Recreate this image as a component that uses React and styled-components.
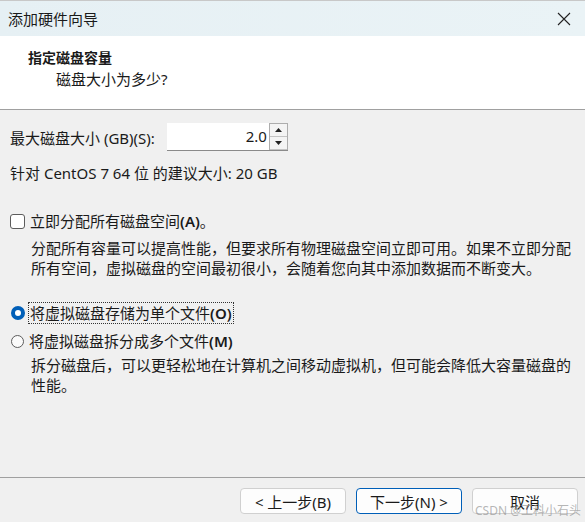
import React from 'react'
import styled, { createGlobalStyle } from 'styled-components'

const Global = createGlobalStyle`
  html, body { margin: 0; padding: 0; }
  body {
    width: 585px;
    height: 522px;
    overflow: hidden;
    font-family: "Noto Sans", "Noto Sans CJK SC", sans-serif;
    color: #1a1a1a;
  }
`

const Window = styled.div`
  width: 585px;
  height: 522px;
  display: flex;
  flex-direction: column;
  background: #f0f0f0;
  border-top: 1px solid #c8c8c8;
  box-sizing: border-box;
`

const TitleBar = styled.div`
  height: 35px;
  display: flex;
  align-items: center;
  justify-content: space-between;
  padding: 0 12px 0 8px;
  background: linear-gradient(90deg, #e6f0f4, #eaf3f6);
  font-size: 15px;
  color: #1a1a1a;
`

const Close = styled.svg`
  width: 14px;
  height: 14px;
  margin-right: 2px;
`

const Header = styled.div`
  height: 74px;
  background: #fff;
  border-bottom: 1px solid #a0a0a0;
  padding: 12px 0 0 28px;
  box-sizing: border-box;
`

const HeadTitle = styled.div`
  font-size: 14px;
  font-weight: 700;
  line-height: 20px;
`

const HeadSub = styled.div`
  font-size: 15px;
  line-height: 22px;
  padding-left: 28px;
`

const Body = styled.div`
  flex: 1;
  padding: 13px 10px 0 10px;
  font-size: 15px;
`

const SizeRow = styled.div`
  display: flex;
  align-items: center;
  gap: 12px;
  height: 28px;
`

const Spin = styled.div`
  display: flex;
  height: 28px;
  border-bottom: 1px solid #8a8a8a;
  box-sizing: border-box;
`

const SpinInput = styled.div`
  width: 100px;
  background: #fff;
  text-align: right;
  line-height: 27px;
  padding-right: 2px;
  font-size: 15px;
`

const SpinButtons = styled.div`
  width: 17px;
  display: flex;
  flex-direction: column;
  border: 1px solid #adadad;
  border-bottom: none;
  background: #e8e8e8;
`

const SpinBtn = styled.div`
  flex: 1;
  display: flex;
  align-items: center;
  justify-content: center;
  background: #f4f4f4;
  border-bottom: 1px solid #c4c4c4;
`

const Hint = styled.div`
  margin-top: 12px;
  line-height: 20px;
`

const Option = styled.div`
  display: flex;
  align-items: center;
  gap: 3px;
  line-height: 20px;
  margin-top: ${p => p.top}px;
`

const CheckBox = styled.span`
  width: 13px;
  height: 13px;
  border: 1px solid #5c5c5c;
  border-radius: 3px;
  background: #fff;
  flex-shrink: 0;
`

const Radio = styled.span`
  width: ${p => (p.checked ? 14 : 13)}px;
  height: ${p => (p.checked ? 14 : 13)}px;
  border-radius: 50%;
  box-sizing: border-box;
  flex-shrink: 0;
  background: ${p => (p.checked ? '#fff' : '#fafafa')};
  border: ${p => (p.checked ? '4px solid #005fb8' : '1px solid #5c5c5c')};
  margin-left: 1px;
`

const Label = styled.span`
  border: 1px dotted ${p => (p.focus ? '#333' : 'transparent')};
  padding: 0 1px;
  b { font-weight: 600; }
`

const Desc = styled.div`
  padding-left: 21px;
  margin-top: ${p => p.top}px;
  line-height: 20px;
`

const Footer = styled.div`
  height: 45px;
  border-top: 1px solid #a0a0a0;
  box-sizing: border-box;
  display: flex;
  justify-content: flex-end;
  align-items: flex-start;
  gap: 10px;
  padding: 10px 7px 0 0;
  position: relative;
`

const Button = styled.div`
  width: 106px;
  height: 26px;
  box-sizing: border-box;
  border-radius: 4px;
  background: #fdfdfd;
  border: 1px solid ${p => (p.primary ? '#005fb8' : '#d0d0d0')};
  box-shadow: ${p => (p.primary ? 'inset 0 0 0 1px #fff' : 'none')};
  display: flex;
  align-items: center;
  justify-content: center;
  font-size: 15px;
`

const Watermark = styled.span`
  position: absolute;
  right: 4px;
  bottom: 3px;
  font-size: 12px;
  color: rgba(150, 150, 150, 0.7);
`

export default function App() {
  return (
    <>
      <Global />
      <Window>
        <TitleBar>
          <span>添加硬件向导</span>
          <Close viewBox="0 0 14 14">
            <path d="M1 1 L13 13 M13 1 L1 13" stroke="#222" strokeWidth="1.1" fill="none" />
          </Close>
        </TitleBar>
        <Header>
          <HeadTitle>指定磁盘容量</HeadTitle>
          <HeadSub>磁盘大小为多少?</HeadSub>
        </Header>
        <Body>
          <SizeRow>
            <span>最大磁盘大小 (GB)(S):</span>
            <Spin>
              <SpinInput>2.0</SpinInput>
              <SpinButtons>
                <SpinBtn>
                  <svg width="7" height="4" viewBox="0 0 7 4"><path d="M0 4 L3.5 0 L7 4 Z" fill="#222" /></svg>
                </SpinBtn>
                <SpinBtn>
                  <svg width="7" height="4" viewBox="0 0 7 4"><path d="M0 0 L7 0 L3.5 4 Z" fill="#222" /></svg>
                </SpinBtn>
              </SpinButtons>
            </Spin>
          </SizeRow>
          <Hint>针对 CentOS 7 64 位 的建议大小: 20 GB</Hint>

          <Option top={27}>
            <CheckBox />
            <Label>立即分配所有磁盘空间<b>(A)</b>。</Label>
          </Option>
          <Desc top={6}>
            分配所有容量可以提高性能，但要求所有物理磁盘空间立即可用。如果不立即分配所有空间，虚拟磁盘的空间最初很小，会随着您向其中添加数据而不断变大。
          </Desc>

          <Option top={24}>
            <Radio checked />
            <Label focus>将虚拟磁盘存储为单个文件<b>(O)</b></Label>
          </Option>
          <Option top={6}>
            <Radio />
            <Label>将虚拟磁盘拆分成多个文件<b>(M)</b></Label>
          </Option>
          <Desc top={3}>
            拆分磁盘后，可以更轻松地在计算机之间移动虚拟机，但可能会降低大容量磁盘的性能。
          </Desc>
        </Body>
        <Footer>
          <Button>&lt; 上一步(B)</Button>
          <Button primary>下一步(N) &gt;</Button>
          <Button>取消</Button>
          <Watermark>CSDN @工科小石头</Watermark>
        </Footer>
      </Window>
    </>
  )
}
